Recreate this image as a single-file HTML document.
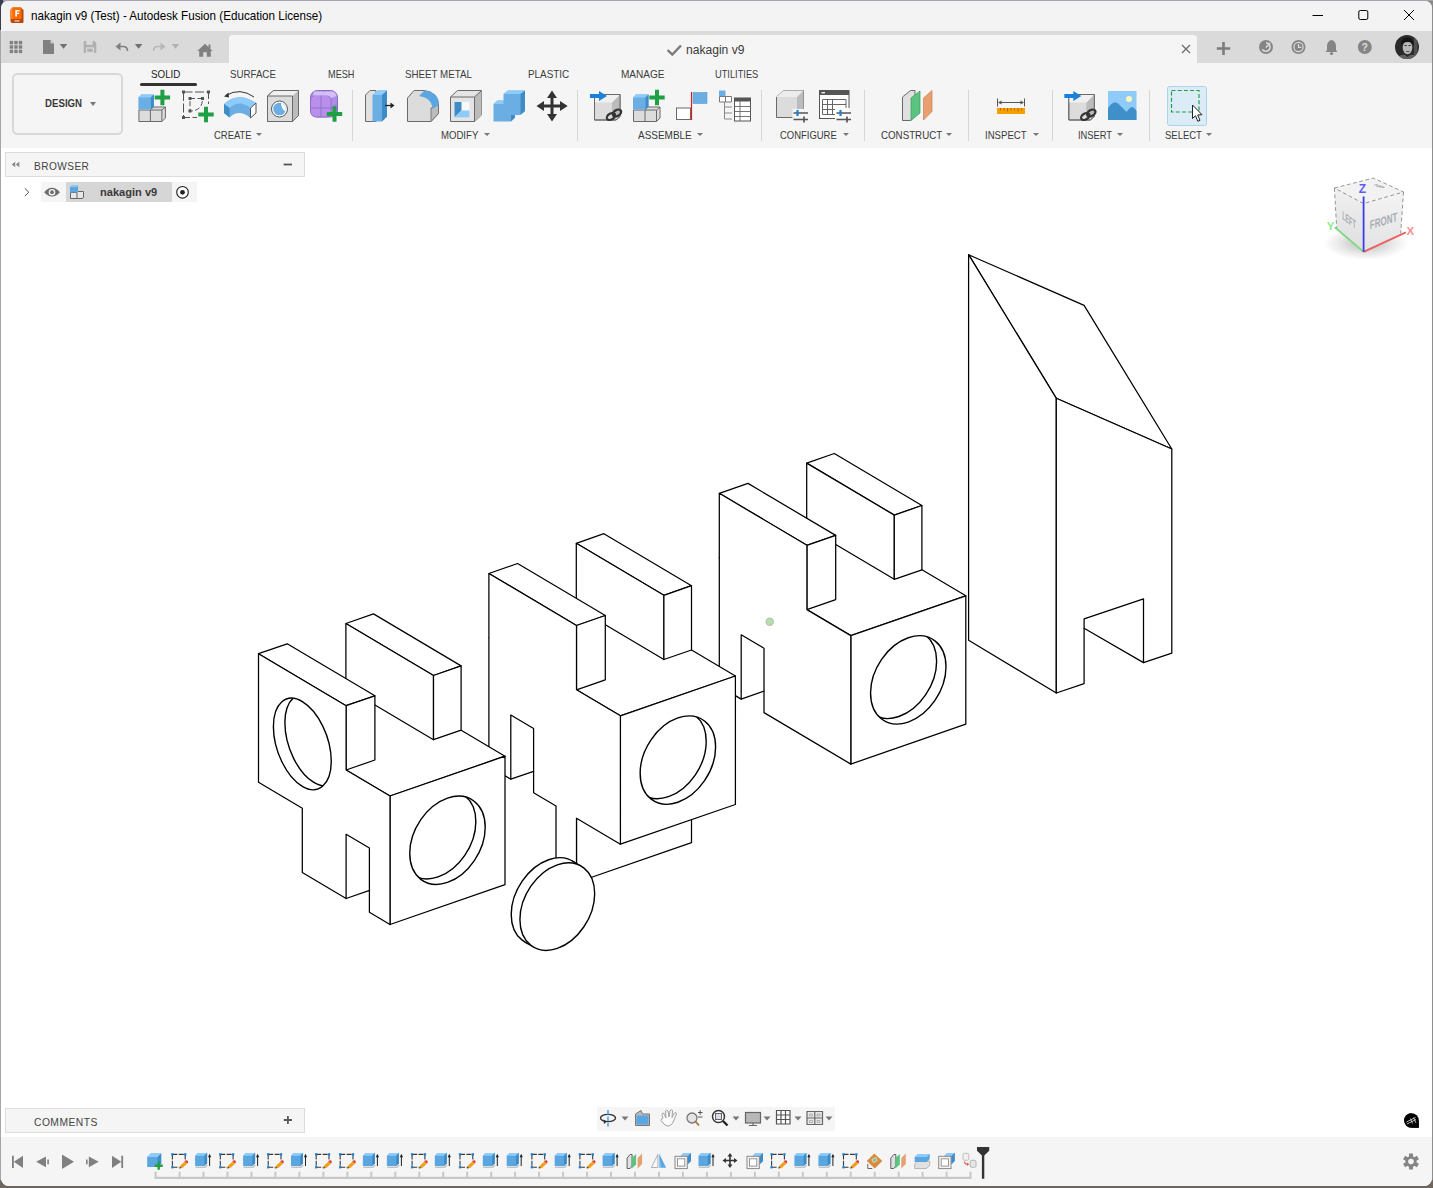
<!DOCTYPE html>
<html><head><meta charset="utf-8"><title>nakagin v9</title>
<style>
html,body{margin:0;padding:0;}
body{width:1433px;height:1188px;overflow:hidden;background:#8a8886;font-family:"Liberation Sans",sans-serif;position:relative;}
#win{position:absolute;left:1px;top:1px;width:1431px;height:1185px;background:#fff;border-radius:7px 7px 8px 8px;overflow:hidden;}
.abs{position:absolute;}
.t{position:absolute;white-space:nowrap;color:#3c3c3c;font-size:11px;line-height:14px;}
svg{position:absolute;overflow:visible;}
.sep{position:absolute;top:90px;width:1px;height:51px;background:#d6d6d6;}
.car{position:absolute;width:0;height:0;border-left:3px solid transparent;border-right:3px solid transparent;border-top:3.6px solid #777;}
</style></head><body>
<div class="abs" style="left:0;top:0;width:1433px;height:1px;background:#a4a4b0"></div>
<div class="abs" style="left:0;top:1px;width:2px;height:1180px;background:#a6a6a8"></div>
<div class="abs" style="left:0;top:0;width:3px;height:30px;background:#3a3c50"></div>
<div class="abs" style="left:1431px;top:8px;width:2px;height:1170px;background:#8e8e8e"></div>
<div class="abs" style="left:0;top:1180px;width:1433px;height:8px;background:#6e665e"></div>
<div id="win"></div>

<div class="abs" style="left:1px;top:1px;width:1431px;height:30px;background:#f3f3f3;border-radius:7px 7px 0 0"></div>
<svg style="left:10px;top:7px" width="15" height="17" viewBox="0 0 15 17">
<path d="M0.5 3 L2.5 0.5 H11 L13.5 3 V15 L13 16 H2 L0.5 15Z" fill="#b84a08"/>
<path d="M0.5 3 L2.5 0.5 H11.5 V12 H0.5Z" fill="#ff6a00"/>
<path d="M0.5 3 L2.5 0.5 V12 H0.5Z" fill="#ff8a2a"/>
<path d="M5.3 9.5 V3 H9.6 V4.5 H7 V5.7 H9.2 V7.1 H7 V9.5Z" fill="#fff"/>
<rect x="4.5" y="13.2" width="5" height="1.4" fill="#f0c0a0"/>
</svg>
<div class="t" style="left:31.20px;top:7.80px;font-size:12.40px;line-height:16px;color:#000;transform:scaleX(0.9395);transform-origin:0 50%;">nakagin v9 (Test) - Autodesk Fusion (Education License)</div>
<svg style="left:1300px;top:5px" width="130" height="22" viewBox="0 0 130 22" fill="none" stroke="#000" stroke-width="1">
<path d="M12.5 10.5 H23"/>
<rect x="58.8" y="5.5" width="9" height="9" rx="1.5"/>
<path d="M104 5 L114 15 M114 5 L104 15"/>
</svg>

<div class="abs" style="left:1px;top:31px;width:1431px;height:32px;background:#dadada"></div>
<div class="abs" style="left:229px;top:35px;width:967.5px;height:28px;background:#f5f5f5;border-radius:3.5px 3.5px 0 0"></div>
<svg style="left:0;top:31px" width="1433" height="32" viewBox="0 31 1433 32">
<!-- grid -->
<g fill="#808080"><rect x="9.70" y="40.90" width="3.4" height="3.4"/><rect x="14.25" y="40.90" width="3.4" height="3.4"/><rect x="18.80" y="40.90" width="3.4" height="3.4"/><rect x="9.70" y="45.30" width="3.4" height="3.4"/><rect x="14.25" y="45.30" width="3.4" height="3.4"/><rect x="18.80" y="45.30" width="3.4" height="3.4"/><rect x="9.70" y="49.70" width="3.4" height="3.4"/><rect x="14.25" y="49.70" width="3.4" height="3.4"/><rect x="18.80" y="49.70" width="3.4" height="3.4"/></g>
<!-- file -->
<path d="M43 40 H50.5 L54 43.5 V54 H43Z" fill="#808080"/><path d="M50.5 40 V43.5 H54Z" fill="#c8c8c8"/>
<path d="M59.8 44 H67.3 L63.55 48.8Z" fill="#707070"/>
<!-- save -->
<path d="M83.7 41 H94.3 L96.3 43 V53 H83.7Z" fill="#b0b0b0"/><rect x="86.2" y="41" width="6.5" height="3.8" fill="#dadada"/><rect x="86" y="47.3" width="8" height="5.7" fill="#dadada"/><rect x="87.200" y="48.6" width="5.6" height="3.2" fill="#b0b0b0"/>
<!-- undo -->
<path d="M117 46.5 H123 Q127.5 46.5 127.5 51" fill="none" stroke="#808080" stroke-width="1.6"/><path d="M115.5 46.5 L120.5 42.5 V50.5Z" fill="#808080"/>
<path d="M134.8 44 H142.4 L138.6 48.8Z" fill="#707070"/>
<!-- redo -->
<path d="M164 46.5 H158 Q153.5 46.5 153.5 51" fill="none" stroke="#b8b8b8" stroke-width="1.6"/><path d="M165.5 46.5 L160.5 42.5 V50.5Z" fill="#b8b8b8"/>
<path d="M171.700 44 H179.2 L175.45 48.8Z" fill="#b0b0b0"/>
<!-- home -->
<path d="M197.3 51 L205 43.8 L212.6 51 H210.8 V56.8 H206.8 V52.300 H203.2 V56.8 H199.2 V51Z" fill="#808080"/><rect x="208.500" y="44.500" width="2" height="4" fill="#808080"/>
<!-- check -->
<path d="M667.600 50 L672.300 54.600 L681 45.500" fill="none" stroke="#7a7a7a" stroke-width="2.400"/>
<!-- close x -->
<path d="M1182 45 L1190 53 M1190 45 L1182 53" stroke="#6c6c6c" stroke-width="1.300"/>
<!-- plus -->
<path d="M1216.800 48.500 H1230.200 M1223.500 42 V55" stroke="#7c7c7c" stroke-width="2.600"/>
<!-- job status -->
<circle cx="1266" cy="47" r="7" fill="#858585"/><path d="M1266 47.500 L1270 43 M1262.300 49.500 A4.300 4.300 0 1 0 1266 42.700" stroke="#dcdcdc" stroke-width="1.600" fill="none"/>
<!-- clock -->
<circle cx="1298.500" cy="47" r="7" fill="#858585"/><circle cx="1298.500" cy="47" r="4.600" fill="none" stroke="#dcdcdc" stroke-width="1.200"/><path d="M1298.500 44 V47.300 H1301.500" stroke="#dcdcdc" stroke-width="1.200" fill="none"/>
<!-- bell -->
<path d="M1331.500 40 Q1327 41 1327 46.500 V50 L1325.500 52 H1337.500 L1336 50 V46.500 Q1336 41 1331.500 40Z" fill="#858585"/><circle cx="1331.500" cy="53.500" r="1.600" fill="#858585"/>
<!-- help -->
<circle cx="1364.800" cy="47" r="7" fill="#858585"/>
<text x="1364.800" y="51" font-family="Liberation Sans" font-weight="bold" font-size="10.500" fill="#dcdcdc" text-anchor="middle">?</text>
<!-- avatar -->
<defs><radialGradient id="av" cx="0.55" cy="0.45" r="0.6"><stop offset="0" stop-color="#8c8c8c"/><stop offset="0.5" stop-color="#4c4c4c"/><stop offset="1" stop-color="#1c1c1c"/></radialGradient></defs>
<circle cx="1407" cy="47" r="12" fill="#2a2a2a"/>
<clipPath id="avc"><circle cx="1407" cy="47" r="12"/></clipPath>
<g clip-path="url(#avc)">
<ellipse cx="1407.500" cy="47.500" rx="4.800" ry="6.800" fill="#b8b8b8"/>
<path d="M1401 46 Q1401 36.500 1408 37.500 Q1414 38 1413.500 46 Q1411.500 41.500 1407.500 42 Q1403 42 1401 46Z" fill="#141414"/>
<path d="M1404.500 45.500 H1406.700 M1408.500 45.500 H1410.700" stroke="#303030" stroke-width="1.200"/>
<path d="M1406 51.500 H1409.500" stroke="#4a4a4a" stroke-width="0.900"/>
<path d="M1396 60 Q1400 54 1405 55 L1407.500 57 L1410 55 Q1416 54 1419 60Z" fill="#606060"/>
<rect x="1414" y="36" width="3.500" height="22" fill="#6a6a6a" opacity="0.600"/>
</g>
</svg>
<div class="t" style="left:686.20px;top:41.64px;font-size:12.30px;line-height:16px;color:#3a3a3a;transform:scaleX(0.9816);transform-origin:0 50%;">nakagin v9</div>

<div class="abs" style="left:1px;top:63px;width:1431px;height:84.7px;background:#f5f5f5"></div>
<div class="abs" style="left:12.2px;top:73.2px;width:106.4px;height:57.6px;border:2px solid #d8d8d8;border-radius:5.5px;box-sizing:content-box"></div>
<div class="t" style="left:44.50px;top:95.12px;font-size:10.90px;line-height:16px;color:#3a3a3a;font-weight:bold;transform:scaleX(0.8877);transform-origin:0 50%;">DESIGN</div>
<div class="car" style="left:89.9px;top:102px;border-left-width:3.2px;border-right-width:3.2px;border-top-width:4px"></div>
<div class="t" style="left:151.30px;top:66.35px;font-size:11.40px;line-height:16px;color:#222;transform:scaleX(0.8594);transform-origin:0 50%;">SOLID</div>
<div class="abs" style="left:139.5px;top:83.2px;width:57px;height:3px;background:#333;border-radius:1.5px"></div>
<div class="t" style="left:229.50px;top:66.35px;font-size:11.40px;line-height:16px;color:#3c3c3c;transform:scaleX(0.8524);transform-origin:0 50%;">SURFACE</div><div class="t" style="left:327.60px;top:66.35px;font-size:11.40px;line-height:16px;color:#3c3c3c;transform:scaleX(0.8045);transform-origin:0 50%;">MESH</div><div class="t" style="left:405.30px;top:66.35px;font-size:11.40px;line-height:16px;color:#3c3c3c;transform:scaleX(0.8575);transform-origin:0 50%;">SHEET METAL</div><div class="t" style="left:528.30px;top:66.35px;font-size:11.40px;line-height:16px;color:#3c3c3c;transform:scaleX(0.8671);transform-origin:0 50%;">PLASTIC</div><div class="t" style="left:621.40px;top:66.35px;font-size:11.40px;line-height:16px;color:#3c3c3c;transform:scaleX(0.8824);transform-origin:0 50%;">MANAGE</div><div class="t" style="left:714.50px;top:66.35px;font-size:11.40px;line-height:16px;color:#3c3c3c;transform:scaleX(0.8138);transform-origin:0 50%;">UTILITIES</div>
<div class="sep" style="left:351.5px"></div><div class="sep" style="left:577px"></div><div class="sep" style="left:761px"></div>
<div class="sep" style="left:863.5px"></div><div class="sep" style="left:967.5px"></div><div class="sep" style="left:1051.5px"></div><div class="sep" style="left:1148.5px"></div>
<div class="t" style="left:213.70px;top:127.03px;font-size:10.60px;line-height:16px;color:#3a3a3a;transform:scaleX(0.8931);transform-origin:0 50%;">CREATE</div><div class="car" style="left:255.6px;top:132.5px"></div><div class="t" style="left:440.60px;top:127.03px;font-size:10.60px;line-height:16px;color:#3a3a3a;transform:scaleX(0.9049);transform-origin:0 50%;">MODIFY</div><div class="car" style="left:483.7px;top:132.5px"></div><div class="t" style="left:637.60px;top:127.03px;font-size:10.60px;line-height:16px;color:#3a3a3a;transform:scaleX(0.9414);transform-origin:0 50%;">ASSEMBLE</div><div class="car" style="left:696.7px;top:132.5px"></div><div class="t" style="left:779.60px;top:127.03px;font-size:10.60px;line-height:16px;color:#3a3a3a;transform:scaleX(0.8931);transform-origin:0 50%;">CONFIGURE</div><div class="car" style="left:842.5px;top:132.5px"></div><div class="t" style="left:880.50px;top:127.03px;font-size:10.60px;line-height:16px;color:#3a3a3a;transform:scaleX(0.9197);transform-origin:0 50%;">CONSTRUCT</div><div class="car" style="left:946.3px;top:132.5px"></div><div class="t" style="left:985.00px;top:127.03px;font-size:10.60px;line-height:16px;color:#3a3a3a;transform:scaleX(0.9055);transform-origin:0 50%;">INSPECT</div><div class="car" style="left:1032.6px;top:132.5px"></div><div class="t" style="left:1077.60px;top:127.03px;font-size:10.60px;line-height:16px;color:#3a3a3a;transform:scaleX(0.8816);transform-origin:0 50%;">INSERT</div><div class="car" style="left:1117.4px;top:132.5px"></div><div class="t" style="left:1164.80px;top:127.03px;font-size:10.60px;line-height:16px;color:#3a3a3a;transform:scaleX(0.8948);transform-origin:0 50%;">SELECT</div><div class="car" style="left:1205.8px;top:132.5px"></div>
<svg style="left:0;top:62px" width="1433" height="86" viewBox="0 62 1433 86">
<defs>
<g id="plus"><path d="M-7.700 -2 H-2 V-7.700 H2 V-2 H7.700 V2 H2 V7.700 H-2 V2 H-7.700Z" fill="#1fa045"/></g>
<g id="newcomp">
 <path d="M0.500 16.500 H12 L15 13.500 H27 V24.500 L23.500 28 H0.500Z" fill="#dcdcdc" stroke="#6a6a6a" stroke-width="1"/>
 <path d="M12 16.500 V28 M12 16.500 H23.500 V28 M23.500 16.500 L27 13.500" fill="none" stroke="#6a6a6a" stroke-width="1"/>
 <path d="M0 4 L3 1 H15.500 V13 L12.500 16 H0Z" fill="#6aaee4"/>
 <path d="M0 4 L3 1 H15.500 L12.500 4Z" fill="#8ecbf9"/><path d="M12.500 4 L15.500 1 V13 L12.500 16Z" fill="#3d8cc8"/>
 <use href="#plus" x="24" y="4"/>
</g>
<g id="derive">
 <path d="M0.500 4.500 L4 1 H26 V23 L22 26.500 H0.500Z" fill="#dcdcdc" stroke="#6a6a6a" stroke-width="1"/>
 <path d="M18 9 L26 1 V23 L18 26.500Z" fill="#bcbcbc"/><path d="M0.500 4.500 L4 1 H26 L18 9 H0.500Z" fill="#f0f0f0"/>
 <path d="M0.500 4.500 L4 1 H26 V23 L22 26.500 H0.500Z" fill="none" stroke="#6a6a6a" stroke-width="1"/>
 <path d="M-4 0.500 H5 V-2.500 L13 2.500 L5 7.500 V4.500 H-4Z" fill="#1a80d8"/>
 <g fill="none" stroke="#333" stroke-width="2.200"><ellipse cx="17" cy="23" rx="4.600" ry="3" transform="rotate(-32 17 23)"/><ellipse cx="23" cy="19.500" rx="4.600" ry="3" transform="rotate(-32 23 19.500)"/></g>
</g>
<g id="sliders" stroke="#555" stroke-width="1.700" fill="none"><path d="M0 2.500 H14.500 M0 9 H14.500 M10.500 6 V12"/><path d="M4 -0.500 V5.500" stroke="#1a80d8" stroke-width="2.200"/></g>
</defs>
<!-- CREATE -->
<use href="#newcomp" x="138.400" y="93.500"/>
<g fill="none" stroke="#555" stroke-width="1">
 <path d="M183.500 92 H208.500 V104 M183.500 92 V117.500 H197" stroke-dasharray="9 2.500"/>
 <path d="M190 98.500 H202.500 Q202.500 111 190 111Z" stroke-dasharray="5 2.500"/>
</g>
<g fill="#555"><rect x="182" y="90.500" width="3" height="3"/><rect x="207" y="90.500" width="3" height="3"/><rect x="182" y="116" width="3" height="3"/><rect x="188.500" y="97" width="3" height="3"/><rect x="201" y="97" width="3" height="3"/><rect x="188.500" y="109.500" width="3" height="3"/></g>
<use href="#plus" x="206" y="114.500"/>
<!-- revolve/sweep -->
<path d="M224 104 Q238 91 256 103 V113 L250.500 118 Q239 108.500 229.500 117.500 L224 113Z" fill="#6aaee4"/>
<path d="M224 104 Q238 91 256 103 L250.500 108 Q239 99 229.500 108Z" fill="#8ecbf9"/>
<path d="M224 104 L229.500 108 V117.500 L224 113Z" fill="#3d8cc8"/>
<path d="M250.500 108 L256 103 V113 L250.500 118Z" fill="#fff" stroke="#555" stroke-width="1"/>
<path d="M226 95.500 Q240 87 254 97" fill="none" stroke="#333" stroke-width="1"/><path d="M224 96.500 L228.500 92.500 L229 97.500Z" fill="#333"/>
<!-- hole -->
<path d="M267.500 96 L273.500 90.500 H298.500 V115.500 L292.500 121.500 H267.500Z" fill="#dcdcdc" stroke="#6a6a6a" stroke-width="1"/>
<path d="M267.500 96 L273.500 90.500 H298.500 L292.500 96Z" fill="#f0f0f0"/><path d="M292.500 96 L298.500 90.500 V115.500 L292.500 121.500Z" fill="#bcbcbc"/>
<path d="M267.500 96 L273.500 90.500 H298.500 V115.500 L292.500 121.500 H267.500Z M267.500 96 H292.500 V121.500" fill="none" stroke="#6a6a6a" stroke-width="1"/>
<circle cx="279.500" cy="109" r="8" fill="#fff" stroke="#555" stroke-width="1"/><circle cx="279.500" cy="109" r="6.300" fill="#6aaee4"/><path d="M281 102.900 A6.300 6.300 0 0 1 285.300 111.500 Q281 108 281 102.900Z" fill="#fff"/>
<!-- form -->
<rect x="310.500" y="90.500" width="27" height="26.500" rx="7" fill="#b08ce8" stroke="#8a6ac0" stroke-width="1"/>
<rect x="310.500" y="95" width="20.500" height="22" rx="5.500" fill="#b890ec" stroke="#8a6ac0" stroke-width="0.800"/>
<path d="M321 95 V117 M310.500 108 H331 M321 95 Q323 91 327 90.500 M331 108 Q335 106 337.500 103" fill="none" stroke="#9070c8" stroke-width="0.900"/>
<path d="M314 91.500 H332 Q336 92 336.500 96 L331 98 Q330 95.500 326 95.500 H313Z" fill="#d8c4f8" opacity="0.900"/>
<use href="#plus" x="334.500" y="114"/>
<!-- MODIFY: press pull -->
<path d="M365.500 95 L370 90.500 H376 V121.500 H365.500Z" fill="#e0e0e0" stroke="#6a6a6a" stroke-width="1"/>
<path d="M372.500 95 L377.500 90.500 H387 V116.500 L382 121.500 H372.500Z" fill="#6aaee4"/><path d="M372.500 95 L377.500 90.500 H387 L382 95Z" fill="#8ecbf9"/><path d="M382 95 L387 90.500 V116.500 L382 121.500Z" fill="#3d8cc8"/>
<path d="M385 105.500 H391.500" stroke="#222" stroke-width="1.300"/><path d="M390.500 102.500 L394.500 105.500 L390.500 108.500Z" fill="#222"/>
<!-- fillet -->
<path d="M407.500 98 L414 90.500 H424 Q438.500 92 438.500 106 V113.500 L431 121.500 H407.500Z" fill="#dcdcdc" stroke="#6a6a6a" stroke-width="1"/>
<path d="M431 121.500 V108 L438.500 104.500 V113.500Z" fill="#bcbcbc" stroke="#6a6a6a" stroke-width="0.800"/>
<path d="M419 96 L424.500 90.500 Q438.500 92 439 104.500 L432.500 109 Q432 98 419 96Z" fill="#5aa6e0"/>
<!-- shell -->
<path d="M450.500 97 L457.500 90.500 H481.500 V115 L474.500 121.500 H450.500Z" fill="#e4e4e4" stroke="#6a6a6a" stroke-width="1"/>
<path d="M474.500 97 L481.500 90.500 V115 L474.500 121.500Z" fill="#bcbcbc"/><path d="M450.500 97 H474.500 V121.500 M474.500 97 L481.500 90.500" fill="none" stroke="#6a6a6a" stroke-width="1"/>
<rect x="454.500" y="102" width="15" height="15.500" fill="#f8f8f8"/><path d="M454.500 102 H461.500 V110.500 L454.500 117.500Z" fill="#3d8cc8"/><path d="M454.500 117.500 L461.500 110.500 H469.500 V117.500Z" fill="#8ecbf9"/>
<!-- combine -->
<path d="M493.500 104 L497.500 100.500 H503.500 V94 L508 90.500 H525 V111 L520 115 H515 V117.500 L511 121.500 H493.500Z" fill="#6aaee4"/>
<path d="M503.500 94 L508 90.500 H525 L520.500 94Z M493.500 104 L497.500 100.500 H503.500 V104Z" fill="#8ecbf9"/><path d="M520.500 94 L525 90.500 V111 L520.500 115Z M511 115 H515 V117.500 L511 121.500Z" fill="#3d8cc8"/>
<!-- move -->
<path d="M552 90.500 L557 98 H553.500 V104.500 H560 V101 L567.700 106 L560 111 V107.500 H553.500 V114 H557 L552 121.500 L547 114 H550.500 V107.500 H544 V111 L536.500 106 L544 101 V104.500 H550.500 V98 H547Z" fill="#333"/>
<!-- ASSEMBLE -->
<use href="#derive" x="594" y="93.500"/>
<use href="#newcomp" x="633" y="93.500"/>
<rect x="676.500" y="108" width="14" height="11.500" fill="#fff" stroke="#6a6a6a" stroke-width="1"/><path d="M691.500 92 V120" stroke="#d82020" stroke-width="1.200"/><rect x="693" y="92.500" width="14" height="11" fill="#6aaee4" stroke="#5a9ad0" stroke-width="0.600"/>
<rect x="719" y="90.500" width="6.500" height="6" fill="#6aaee4"/><path d="M719.500 96.500 H725.500 V102 H719.500Z M725.500 96.500 H731.500 V102 H725.500Z" fill="#fff" stroke="#777" stroke-width="1"/>
<path d="M724.500 102 V119 M724.500 107 H732 M724.500 113 H732 M724.500 119 H732" fill="none" stroke="#888" stroke-width="1"/>
<rect x="734.500" y="98" width="16" height="23" fill="#fff" stroke="#555" stroke-width="1"/><rect x="734.500" y="98" width="16" height="3.500" fill="#555"/><path d="M740 101 V121 M734.500 106.500 H750.500 M734.500 111.500 H750.500 M734.500 116.500 H750.500" stroke="#666" stroke-width="0.900" fill="none"/>
<!-- CONFIGURE -->
<path d="M776.500 97 L783.500 90.500 H803.500 V112 L797 117.500 H776.500Z" fill="#dcdcdc" stroke="#6a6a6a" stroke-width="1"/>
<path d="M797 97 L803.500 90.500 V112 L797 117.500Z" fill="#bcbcbc"/><path d="M776.500 97 L783.500 90.500 H803.500 L797 97Z" fill="#ececec"/>
<rect x="792.500" y="109" width="16.500" height="13" fill="#f5f5f5"/>
<use href="#sliders" x="793.500" y="110.500"/>
<rect x="819.500" y="90.500" width="29.500" height="28" fill="#fff" stroke="#555" stroke-width="1"/><rect x="819.500" y="90.500" width="29.500" height="4.500" fill="#555"/><rect x="821.500" y="92" width="3.500" height="1.400" fill="#eee"/>
<path d="M822.500 99.500 H846 V114.500 H822.500Z M822.500 104.500 H846 M822.500 109.500 H846 M827.500 99.500 V114.500 M832.500 99.500 V114.500" fill="none" stroke="#666" stroke-width="1"/>
<rect x="835" y="108" width="17" height="14" fill="#f5f5f5"/><rect x="835" y="108" width="14" height="10" fill="#fff"/>
<use href="#sliders" x="836.500" y="110.500"/>
<!-- CONSTRUCT -->
<path d="M902.500 97 L910.500 90.500 H915 V114 L910.500 120.500 H902.500Z" fill="#e0e0e0" stroke="#6a6a6a" stroke-width="1"/>
<path d="M911 98 L920 91 V113 L911 120.500Z" fill="#5ac480" stroke="#3a9a5a" stroke-width="0.700"/>
<path d="M923.500 98 L932 90.500 V111.500 L923.500 120Z" fill="#e8a070" stroke="#c88050" stroke-width="0.700"/>
<!-- INSPECT -->
<path d="M997.500 98.500 V106.500 M1024.500 98.500 V106.500 M999.500 102.500 H1022.500" stroke="#555" stroke-width="1" fill="none"/><path d="M998 102.500 L1001.500 100.500 V104.500Z M1024 102.500 L1020.500 100.500 V104.500Z" fill="#555"/>
<rect x="997" y="108" width="28" height="6" fill="#f5a000"/><path d="M1000.500 108 V110.500 M1004 108 V110.500 M1007.500 108 V111.500 M1011 108 V110.500 M1014.500 108 V110.500 M1018 108 V111.500 M1021.500 108 V110.500" stroke="#a86800" stroke-width="0.900"/>
<!-- INSERT -->
<use href="#derive" x="1068.300" y="93.500"/>
<rect x="1108" y="91" width="28.500" height="29" fill="#8ecbf9"/><path d="M1108 108 Q1113 100 1118 103.500 Q1123 108 1126.500 112 Q1130 107 1132.500 107 Q1135 108 1136.500 111 V120 H1108Z" fill="#3f8fc8"/><circle cx="1129" cy="99" r="3" fill="#fdf6c0"/>
<!-- SELECT -->
<rect x="1167.500" y="86.500" width="39" height="39" rx="2" fill="#dcecf6" stroke="#a8d4ee" stroke-width="1"/>
<rect x="1171.500" y="90.500" width="27.500" height="21.500" fill="none" stroke="#1fa045" stroke-width="1.200" stroke-dasharray="4 2.200"/>
<path d="M1192.500 105 V118.500 L1195.500 115.800 L1197.800 121.300 L1200 120.300 L1197.700 115 L1202 114.700Z" fill="#fff" stroke="#222" stroke-width="1"/>
</svg>

<div class="abs" style="left:5px;top:152px;width:298px;height:23px;background:#f5f5f5;border:1px solid #dcdcdc;box-sizing:content-box"></div>
<svg style="left:0;top:148px" width="320" height="60" viewBox="0 148 320 60">
<path d="M15.200 161.800 V167.200 L11.700 164.500Z M19.300 161.800 V167.200 L15.800 164.500Z" fill="#888"/>
<path d="M283.600 164.500 H292" stroke="#555" stroke-width="1.800"/>
<rect x="41" y="182" width="156" height="20" fill="#f5f5f5"/>
<rect x="66" y="182" width="106" height="20" fill="#d6d6d6"/>
<path d="M24.800 188.300 L28.800 192.200 L24.800 196.100" fill="none" stroke="#555" stroke-width="1"/>
<path d="M44.200 192.200 Q52 183.400 59.900 192.200 Q52 201 44.200 192.200Z" fill="#6c6c6c"/><circle cx="52" cy="192.200" r="3.300" fill="#f5f5f5"/><circle cx="52" cy="192.200" r="1.900" fill="#6c6c6c"/>
<path d="M70.500 192.500 H77 L78 191.500 H83.500 V197 L82.500 198.500 H70.500Z M77 192.500 V198.500" fill="#e8e8e8" stroke="#666" stroke-width="1"/>
<path d="M70 187 L71.500 185.500 H78 V191 L76.500 192.500 H70Z" fill="#5aa6e0"/><path d="M70 187 L71.500 185.500 H78 L76.500 187Z" fill="#8ecbf9"/>
<circle cx="182.500" cy="192.300" r="5.800" fill="#fff" stroke="#222" stroke-width="1.100"/><circle cx="182.500" cy="192.300" r="2.400" fill="#222"/>
</svg>
<div class="t" style="left:33.80px;top:157.92px;font-size:11.50px;line-height:16px;color:#444;letter-spacing:0.50px;transform:scaleX(0.8789);transform-origin:0 50%;">BROWSER</div>
<div class="t" style="left:99.50px;top:184.49px;font-size:11.00px;line-height:16px;color:#3a3a3a;font-weight:bold;transform:scaleX(1.0060);transform-origin:0 50%;">nakagin v9</div>
<svg id="model" width="1433" height="1188" viewBox="0 0 1433 1188" style="position:absolute;left:0;top:0" fill="#fff" stroke="#000" stroke-width="1.25" stroke-linejoin="round" stroke-linecap="round">
<polygon points="968.6,254.7 1084.1,305.4 1171.8,449.0 1056.3,398.3" fill="#fff"/>
<polygon points="968.6,254.7 1056.3,398.3 1056.3,693.0 968.6,640.2" fill="#fff"/>
<polygon points="1056.3,398.3 1171.8,449.0 1171.8,653.2 1143.5,662.6 1143.5,598.8 1084.1,618.9 1084.1,683.6 1056.3,693.0" fill="#fff"/>
<line x1="1084.1" y1="628.3" x2="1143.5" y2="662.6"/>
<polygon points="719.3,557.6 834.3,517.8 965.8,595.8 850.8,635.6" fill="#fff"/>
<polygon points="850.8,635.6 965.8,595.8 965.8,724.2 850.8,764.1" fill="#fff"/>
<clipPath id="hc1"><circle r="0.3280" transform="matrix(115.000 -39.800 0.000 128.500 908.27 679.90)" vector-effect="non-scaling-stroke" stroke-width="1.4" /></clipPath><circle r="0.3280" transform="matrix(115.000 -39.800 0.000 128.500 908.27 679.90)" vector-effect="non-scaling-stroke" stroke-width="1.4" fill="#fff"/><g clip-path="url(#hc1)"><circle r="0.3280" transform="matrix(115.000 -39.800 0.000 128.500 898.90 674.34)" vector-effect="non-scaling-stroke" stroke-width="1.4" fill="none"/></g>
<polygon points="806.7,463.1 834.3,453.5 921.9,505.5 894.3,515.1" fill="#fff"/>
<polygon points="806.7,463.1 894.3,515.1 894.3,579.3 806.7,527.3" fill="#fff"/>
<polygon points="894.3,515.1 921.9,505.5 921.9,569.8 894.3,579.3" fill="#fff"/>
<polygon points="719.3,493.3 748.0,483.4 835.7,535.4 806.9,545.3" fill="#fff"/>
<polygon points="806.9,545.3 835.7,535.4 835.7,599.6 806.9,609.6" fill="#fff"/>
<polygon points="719.3,493.3 806.9,545.3 806.9,609.6 850.8,635.6 850.8,764.1 764.0,712.6 764.0,648.3 741.2,634.8 741.2,699.1 719.3,686.1" fill="#fff"/>
<line x1="741.2" y1="699.1" x2="764.0" y2="691.2"/>
<polygon points="576.5,818.2 691.5,778.5 691.5,842.7 576.5,882.5" fill="#fff"/>
<polygon points="488.9,637.8 603.9,598.0 735.4,676.0 620.4,715.8" fill="#fff"/>
<polygon points="620.4,715.8 735.4,676.0 735.4,804.5 620.4,844.2" fill="#fff"/>
<clipPath id="hc2"><circle r="0.3280" transform="matrix(115.000 -39.800 0.000 128.500 677.88 760.10)" vector-effect="non-scaling-stroke" stroke-width="1.4" /></clipPath><circle r="0.3280" transform="matrix(115.000 -39.800 0.000 128.500 677.88 760.10)" vector-effect="non-scaling-stroke" stroke-width="1.4" fill="#fff"/><g clip-path="url(#hc2)"><circle r="0.3280" transform="matrix(115.000 -39.800 0.000 128.500 668.50 754.54)" vector-effect="non-scaling-stroke" stroke-width="1.4" fill="none"/></g>
<polygon points="576.3,543.3 603.9,533.7 691.5,585.7 663.9,595.3" fill="#fff"/>
<polygon points="576.3,543.3 663.9,595.3 663.9,659.5 576.3,607.5" fill="#fff"/>
<polygon points="663.9,595.3 691.5,585.7 691.5,650.0 663.9,659.5" fill="#fff"/>
<polygon points="488.9,573.5 517.6,563.5 605.3,615.5 576.5,625.5" fill="#fff"/>
<polygon points="576.5,625.5 605.3,615.5 605.3,679.8 576.5,689.8" fill="#fff"/>
<polygon points="488.9,573.5 576.5,625.5 576.5,689.8 620.4,715.8 620.4,844.2 576.5,818.2 576.5,882.5 556.0,870.3 556.0,806.0 533.6,792.8 533.6,728.5 510.8,715.0 510.8,779.2 488.9,766.2" fill="#fff"/>
<line x1="510.8" y1="779.2" x2="533.6" y2="771.4"/>
<polygon points="258.5,718.0 373.5,678.2 505.0,756.2 390.0,796.0" fill="#fff"/>
<polygon points="390.0,796.0 505.0,756.2 505.0,884.7 390.0,924.5" fill="#fff"/>
<clipPath id="hc3"><circle r="0.3280" transform="matrix(115.000 -39.800 0.000 128.500 447.48 840.30)" vector-effect="non-scaling-stroke" stroke-width="1.4" /></clipPath><circle r="0.3280" transform="matrix(115.000 -39.800 0.000 128.500 447.48 840.30)" vector-effect="non-scaling-stroke" stroke-width="1.4" fill="#fff"/><g clip-path="url(#hc3)"><circle r="0.3280" transform="matrix(115.000 -39.800 0.000 128.500 438.10 834.74)" vector-effect="non-scaling-stroke" stroke-width="1.4" fill="none"/></g>
<polygon points="345.9,623.5 373.5,613.9 461.1,665.9 433.5,675.5" fill="#fff"/>
<polygon points="345.9,623.5 433.5,675.5 433.5,739.7 345.9,687.7" fill="#fff"/>
<polygon points="433.5,675.5 461.1,665.9 461.1,730.2 433.5,739.7" fill="#fff"/>
<polygon points="258.5,653.7 287.2,643.8 374.9,695.8 346.1,705.7" fill="#fff"/>
<polygon points="346.1,705.7 374.9,695.8 374.9,760.0 346.1,770.0" fill="#fff"/>
<polygon points="258.5,653.7 346.1,705.7 346.1,770.0 390.0,796.0 390.0,924.5 369.4,912.2 369.4,848.0 346.1,834.2 346.1,898.5 302.3,872.5 302.3,808.2 258.5,782.2" fill="#fff"/>
<line x1="346.1" y1="898.5" x2="369.6" y2="890.3"/>
<clipPath id="hc4"><circle r="0.3300" transform="matrix(87.650 52.000 0.000 128.500 302.32 743.95)" vector-effect="non-scaling-stroke" stroke-width="1.4" /></clipPath><circle r="0.3300" transform="matrix(87.650 52.000 0.000 128.500 302.32 743.95)" vector-effect="non-scaling-stroke" stroke-width="1.4" fill="#fff"/><g clip-path="url(#hc4)"><circle r="0.3300" transform="matrix(87.650 52.000 0.000 128.500 313.82 739.97)" vector-effect="non-scaling-stroke" stroke-width="1.4" fill="none"/></g>
<circle r="0.3250" transform="matrix(115.000 -39.800 0.000 128.500 548.60 901.50)" vector-effect="non-scaling-stroke" stroke-width="1.4" fill="#fff"/>
<polygon points="533.4,947.0 524.7,941.9 572.5,861.1 581.2,866.2" fill="#fff" stroke="none"/>
<line x1="533.4" y1="947.0" x2="524.7" y2="941.9"/>
<line x1="581.2" y1="866.2" x2="572.5" y2="861.1"/>
<circle r="0.3250" transform="matrix(115.000 -39.800 0.000 128.500 557.30 906.60)" vector-effect="non-scaling-stroke" stroke-width="1.4" fill="#fff"/>
<circle cx="769.7" cy="621.8" r="3.7" fill="#b2e0a6" stroke="#bcc0bc" stroke-width="1.1"/>
</svg>
<svg style="left:1300px;top:160px" width="133" height="110" viewBox="1300 160 133 110">
<defs>
<radialGradient id="shd" cx="0.500" cy="0.500" r="0.500"><stop offset="0" stop-color="#000" stop-opacity="0.280"/><stop offset="0.600" stop-color="#000" stop-opacity="0.100"/><stop offset="1" stop-color="#000" stop-opacity="0"/></radialGradient>
<linearGradient id="fl" x1="0" y1="0" x2="0" y2="1"><stop offset="0" stop-color="#f0f0f0"/><stop offset="1" stop-color="#dedede"/></linearGradient>
<linearGradient id="fr" x1="0" y1="0" x2="0" y2="1"><stop offset="0" stop-color="#f4f4f4"/><stop offset="1" stop-color="#e2e2e2"/></linearGradient>
</defs>
<ellipse cx="1366" cy="243" rx="42" ry="17" fill="url(#shd)"/>
<path d="M1334.400 188 L1363.600 203.600 V251.900 L1336.700 228.700Z" fill="url(#fl)"/>
<path d="M1363.600 203.600 L1403.500 192 L1400.700 233.400 L1363.600 251.900Z" fill="url(#fr)"/>
<path d="M1334.400 188 L1373.400 178.100 L1403.500 192 L1363.600 203.600Z" fill="#f2f2f2"/>
<g fill="none" stroke="#7c7c7c" stroke-width="0.800" stroke-dasharray="3.800 2.600">
<path d="M1334.400 188 L1373.400 178.100 L1403.500 192 L1363.600 203.600Z"/><path d="M1334.400 188 L1336.700 228.700"/><path d="M1403.500 192 L1400.700 233.400"/>
</g>
<path d="M1363.600 251.900 L1334.800 227.300" stroke="#7ed87e" stroke-width="1.800"/>
<path d="M1363.600 251.900 L1405.800 232.400" stroke="#e86060" stroke-width="1.800"/>
<path d="M1363.600 196.500 V251.900" stroke="#3a3aee" stroke-width="1.800"/>
<text x="1358.800" y="193" font-family="Liberation Sans" font-weight="bold" font-size="12" fill="#5c5cf4">Z</text>
<text x="1326.800" y="229.500" font-family="Liberation Sans" font-weight="bold" font-size="11.500" fill="#8cec8c">Y</text>
<text x="1406.500" y="235" font-family="Liberation Sans" font-weight="bold" font-size="11.500" fill="#f49090">X</text>
<text transform="matrix(0.450 0.340 0 1 1342.200 219)" font-family="Liberation Sans" font-weight="bold" font-size="12" fill="#a8acb2">LEFT</text>
<text transform="matrix(0.640 -0.200 0 1 1369.800 229.500)" font-family="Liberation Sans" font-weight="bold" font-size="12.500" fill="#a8acb2">FRONT</text>
<text transform="matrix(0.900 0.300 -0.900 0.300 1372 185)" font-family="Liberation Sans" font-size="5.500" font-weight="bold" fill="#8a8e94">TOP</text>
</svg>

<div class="abs" style="left:597px;top:1107px;width:238px;height:24px;background:#f5f5f5"></div>
<svg style="left:580px;top:1095px" width="280" height="45" viewBox="580 1095 280 45">
<ellipse cx="608" cy="1118" rx="7.500" ry="3.600" fill="none" stroke="#333" stroke-width="1.400"/><path d="M608 1110 V1126.500" stroke="#4aa8ec" stroke-width="1.600" stroke-dasharray="4.500 2"/><path d="M603.500 1119.500 L607 1121.500 L604 1124Z" fill="#333"/>
<path d="M621.500 1116.500 H628.500 L625 1120.500Z" fill="#777"/>
<path d="M635.500 1114 L641 1110.500 L642.500 1114 H649.500 V1125.500 H635.500Z" fill="#bbb" stroke="#777" stroke-width="1"/><rect x="636.500" y="1115.500" width="12" height="9" fill="#5aa6e0"/>
<path d="M663 1118 Q661 1113 663.500 1113 L666 1118 L665.500 1111 Q667 1109.500 668 1111 L669 1117 L670 1110.500 Q671.500 1109 672.500 1110.500 L672 1117.500 L674.500 1113 Q676.500 1112 676.500 1114 L673.500 1121 Q672 1126 667 1126 Q664 1125 661 1120.500 Q661 1118.500 663 1118Z" fill="#fafafa" stroke="#999" stroke-width="0.900"/>
<circle cx="692" cy="1118" r="5" fill="#e4e4e4" stroke="#777" stroke-width="1.300"/><path d="M695.500 1121.500 L699 1125.500" stroke="#b07030" stroke-width="1.800"/><path d="M698 1112.500 H702.500 M700.200 1110.300 V1114.800 M698 1117 H702.500" stroke="#555" stroke-width="1"/>
<circle cx="718.500" cy="1116.500" r="6" fill="#fff" stroke="#333" stroke-width="1.500"/><rect x="715.500" y="1113.500" width="6" height="6" fill="#d8dce8" stroke="#555" stroke-width="0.900"/><path d="M723 1121 L727.500 1125.500" stroke="#222" stroke-width="2.400"/>
<path d="M732.500 1116.500 H739.500 L736 1120.500Z" fill="#777"/>
<rect x="745.500" y="1112.500" width="15" height="10.500" fill="#b8b8b8" stroke="#666" stroke-width="1.200"/><path d="M749 1125.500 H757 M753 1123 V1125.500" stroke="#666" stroke-width="1.200"/>
<path d="M763.500 1116.500 H770.500 L767 1120.500Z" fill="#777"/>
<path d="M776.500 1110.500 H790 V1124 H776.500Z M781 1110.500 V1124 M785.500 1110.500 V1124 M776.500 1115 H790 M776.500 1119.500 H790" fill="#fff" stroke="#555" stroke-width="1.200"/>
<path d="M794.500 1116.500 H801.500 L798 1120.500Z" fill="#777"/>
<path d="M807 1111.500 H822.500 V1124.500 H807Z M814.800 1111.500 V1124.500 M807 1118 H822.500" fill="#e8e8e8" stroke="#666" stroke-width="1.200"/><path d="M809.500 1114 H812.500 V1116 H809.500Z M817 1114 H820 V1116 H817Z M809.500 1120.500 H812.500 V1122.500 H809.500Z M817 1120.500 H820 V1122.500 H817Z" fill="none" stroke="#999" stroke-width="0.700"/>
<path d="M825.500 1116.500 H832.500 L829 1120.500Z" fill="#777"/>
</svg>
<svg style="left:1400px;top:1108px" width="24" height="24" viewBox="1400 1108 24 24">
<path d="M1411.500 1113.200 A7.300 7.300 0 1 0 1418.800 1120.500 V1127.800 H1411.500" fill="#000"/><circle cx="1411.500" cy="1120.500" r="7.300" fill="#000"/><path d="M1418.800 1120.500 V1127.800 H1411.500Z" fill="#000"/>
<path d="M1406.500 1122 L1415.500 1117.500 M1407 1124 L1416 1119.500 M1410.500 1118.500 L1412.500 1123.500 M1413.500 1117.500 L1416 1123" stroke="#ddd" stroke-width="0.800" fill="none"/>
</svg>

<div class="abs" style="left:5px;top:1108px;width:298px;height:22.5px;background:#f5f5f5;border:1px solid #dcdcdc;box-sizing:content-box"></div>
<div class="t" style="left:33.60px;top:1113.92px;font-size:11.50px;line-height:16px;color:#444;letter-spacing:0.50px;transform:scaleX(0.8962);transform-origin:0 50%;">COMMENTS</div>
<svg style="left:280px;top:1112px" width="16" height="16" viewBox="280 1112 16 16"><path d="M283.800 1120 H292 M287.900 1115.900 V1124.100" stroke="#5a5a5a" stroke-width="1.800"/></svg>

<div class="abs" style="left:1px;top:1137px;width:1431px;height:49px;background:#f5f5f5;border-radius:0 0 8px 8px"></div>
<svg style="left:0;top:1137px" width="1433" height="51" viewBox="0 1137 1433 51">
<defs>
<g id="i_ex"><path d="M0.300 14.300 H10 L12.300 12" fill="none" stroke="#c4c4c4" stroke-width="1.600"/><path d="M0 2.800 L2.800 0 H12 V10.200 L9.300 13 H0Z" fill="#5aa6e0"/><path d="M0 2.800 L2.800 0 H12 L9.300 2.800Z" fill="#8ecbf9"/><path d="M9.300 2.800 L12 0 V10.200 L9.300 13Z" fill="#3d8cc8"/><path d="M14.500 13 V2.500" stroke="#222" stroke-width="1"/><path d="M12.900 4.300 L14.500 0.800 L16.100 4.300Z" fill="#222"/></g>
<g id="i_sk"><path d="M1.200 1.400 H14 V8.500 M1.200 1.400 V14.200 H8" fill="none" stroke="#3a3a3a" stroke-width="1.100" stroke-dasharray="5 1.400"/><g fill="#1a80d8"><rect x="0" y="0.200" width="2.300" height="2.300"/><rect x="12.900" y="0.200" width="2.300" height="2.300"/><rect x="0" y="13.100" width="2.300" height="2.300"/></g><path d="M8 15.600 L9.200 12.600 L13.800 8.200 L16 10.400 L11.300 14.900Z" fill="#f0a020"/><path d="M8 15.600 L8.800 13.600 L10.200 15Z" fill="#444"/><path d="M13.800 8.200 L14.600 7.400 Q15.800 6.800 16.500 7.800 L16.800 9.400 L16 10.400Z" fill="#e83030"/></g>
<g id="i_nc"><path d="M0 4 L3.500 0.500 H14 V10.500 L10.500 14 H0Z" fill="#5aa6e0"/><path d="M0 4 L3.500 0.500 H14 L10.500 4Z" fill="#8ecbf9"/><path d="M10.500 4 L14 0.500 V10.500 L10.500 14Z" fill="#3d8cc8"/><path d="M7.500 11.500 H10.300 V8.700 H12.700 V11.500 H15.500 V13.900 H12.700 V16.700 H10.300 V13.900 H7.500Z" fill="#1fa045"/></g>
<g id="i_pl"><path d="M0.500 5 L3.500 1.500 H5.500 V13 L3.500 15.500 H0.500Z" fill="#e0e0e0" stroke="#555" stroke-width="0.900"/><path d="M5 5 L9.500 1 V11.500 L5 15.500Z" fill="#5ac480"/><path d="M11 5 L15.500 0.500 V11 L11 15.500Z" fill="#e8a070"/></g>
<g id="i_tri"><path d="M7.300 1.500 V14.500 H0.800Z" fill="#fafafa" stroke="#a8a8a8" stroke-width="0.900"/><path d="M8.500 0.500 L15.500 14.800 H8.500Z" fill="#5aa6e0"/><path d="M8.500 0.500 V14.800 H10.500Z" fill="#8ecbf9"/></g>
<g id="i_box"><path d="M6 3 L9 0 H16.500 V8 L13.500 11 H6Z" fill="#5aa6e0"/><path d="M6 3 L9 0 H16.500 L13.500 3Z" fill="#8ecbf9"/><path d="M13.500 3 L16.500 0 V8 L13.500 11Z" fill="#3d8cc8"/><rect x="0.500" y="3.300" width="12.300" height="12.300" fill="#f5f5f5" stroke="#8a8a8a" stroke-width="1"/><rect x="3" y="5.800" width="7.300" height="7.300" fill="#fff" stroke="#8a8a8a" stroke-width="0.900"/></g>
<g id="i_mv"><path d="M7.500 0 L10 3.500 H8.300 V6.700 H11.500 V5 L15 7.500 L11.500 10 V8.300 H8.300 V11.500 H10 L7.500 15 L5 11.500 H6.700 V8.300 H3.500 V10 L0 7.500 L3.500 5 V6.700 H6.700 V3.500 H5Z" fill="#333"/></g>
<g id="i_dia"><path d="M8 0.500 L16 8 L8.500 15.500 L0.500 8Z" fill="#d88a40"/><path d="M5.500 6.500 L9.500 4.500 L11 7.500 L7 9.500Z" fill="#7ac47a" stroke="#fff" stroke-width="0.600"/><path d="M1.500 11 V15.500 H6" fill="none" stroke="#666" stroke-width="1"/></g>
<g id="i_lay"><path d="M0.500 11 L3.500 8 H15.500 V12.500 L12.500 15.500 H0.500Z" fill="#e0e0e0" stroke="#aaa" stroke-width="0.800"/><path d="M0.500 4 L3.500 1 H15.500 V6 L12.500 9 H0.500Z" fill="#5aa6e0"/><path d="M0.500 4 L3.500 1 H15.500 L12.500 4Z" fill="#8ecbf9"/></g>
<g id="i_fade" opacity="0.850"><rect x="0.800" y="0.300" width="5.800" height="7" rx="1.500" fill="#f0f0f0" stroke="#b0b0b0" stroke-width="0.900"/><rect x="8" y="7.300" width="5.800" height="7" rx="1.500" fill="#e4e4e4" stroke="#a0a0a0" stroke-width="0.900"/><path d="M2.300 8.500 Q2.300 11.300 5.500 11.300" fill="none" stroke="#e04030" stroke-width="1.100"/><path d="M4.800 9.600 L7 11.300 L4.800 13Z" fill="#e04030"/></g>
</defs>
<g fill="#808080">
<rect x="12" y="1155.700" width="1.800" height="12.300"/><path d="M23 1155.700 V1168 L13.800 1161.800Z"/>
<path d="M46 1156.500 V1167.200 L36.100 1161.800Z"/><rect x="47.300" y="1159.500" width="1.600" height="4.800"/>
<path d="M62 1154.600 V1169 L74 1161.800Z"/>
<rect x="86" y="1159.500" width="1.600" height="4.800"/><path d="M88.800 1156.500 V1167.200 L98.700 1161.800Z"/>
<path d="M112 1155.700 V1168 L121.300 1161.800Z"/><rect x="121.300" y="1155.700" width="1.800" height="12.300"/>
</g>
<path d="M155.600 1171.800 V1177.900 H970.500 V1171.800" fill="none" stroke="#c8c8c8" stroke-width="2.100"/>
<path d="M179.6 1171.800 V1177.900 M203.5 1171.800 V1177.900 M227.5 1171.800 V1177.900 M251.5 1171.800 V1177.900 M275.4 1171.800 V1177.900 M299.4 1171.800 V1177.900 M323.4 1171.800 V1177.900 M347.4 1171.800 V1177.900 M371.3 1171.800 V1177.900 M395.3 1171.800 V1177.900 M419.3 1171.800 V1177.900 M443.2 1171.800 V1177.900 M467.2 1171.800 V1177.900 M491.2 1171.800 V1177.900 M515.1 1171.800 V1177.900 M539.1 1171.800 V1177.900 M563.1 1171.800 V1177.900 M587.1 1171.800 V1177.900 M611.0 1171.800 V1177.900 M635.0 1171.800 V1177.900 M659.0 1171.800 V1177.900 M682.9 1171.800 V1177.900 M706.9 1171.800 V1177.900 M730.9 1171.800 V1177.900 M754.9 1171.800 V1177.900 M778.8 1171.800 V1177.900 M802.8 1171.800 V1177.900 M826.8 1171.800 V1177.900 M850.7 1171.800 V1177.900 M874.7 1171.800 V1177.900 M898.7 1171.800 V1177.900 M922.6 1171.800 V1177.900 M946.6 1171.800 V1177.900" stroke="#c8c8c8" stroke-width="2" fill="none"/>
<use href="#i_nc" x="147.2" y="1153.0"/><use href="#i_sk" x="171.2" y="1153.0"/><use href="#i_ex" x="195.1" y="1153.0"/><use href="#i_sk" x="219.1" y="1153.0"/><use href="#i_ex" x="243.1" y="1153.0"/><use href="#i_sk" x="267.0" y="1153.0"/><use href="#i_ex" x="291.0" y="1153.0"/><use href="#i_sk" x="315.0" y="1153.0"/><use href="#i_sk" x="339.0" y="1153.0"/><use href="#i_ex" x="362.9" y="1153.0"/><use href="#i_ex" x="386.9" y="1153.0"/><use href="#i_sk" x="410.9" y="1153.0"/><use href="#i_ex" x="434.8" y="1153.0"/><use href="#i_sk" x="458.8" y="1153.0"/><use href="#i_ex" x="482.8" y="1153.0"/><use href="#i_ex" x="506.7" y="1153.0"/><use href="#i_sk" x="530.7" y="1153.0"/><use href="#i_ex" x="554.7" y="1153.0"/><use href="#i_sk" x="578.7" y="1153.0"/><use href="#i_ex" x="602.6" y="1153.0"/><use href="#i_pl" x="626.6" y="1153.0"/><use href="#i_tri" x="650.6" y="1153.0"/><use href="#i_box" x="674.5" y="1153.0"/><use href="#i_ex" x="698.5" y="1153.0"/><use href="#i_mv" x="722.5" y="1153.0"/><use href="#i_box" x="746.5" y="1153.0"/><use href="#i_sk" x="770.4" y="1153.0"/><use href="#i_ex" x="794.4" y="1153.0"/><use href="#i_ex" x="818.4" y="1153.0"/><use href="#i_sk" x="842.3" y="1153.0"/><use href="#i_dia" x="866.3" y="1153.0"/><use href="#i_pl" x="890.3" y="1153.0"/><use href="#i_lay" x="914.2" y="1153.0"/><use href="#i_box" x="938.2" y="1153.0"/><use href="#i_fade" x="962.2" y="1153.0"/>
<path d="M977 1147 H989.200 V1150.800 L984.300 1155.500 V1178.800 H981.900 V1155.500 L977 1150.800Z" fill="#333"/>
<g transform="translate(1411 1161.500)" fill="#858585"><circle r="5.600"/><g><rect x="-2" y="-8" width="4" height="16"/><rect x="-2" y="-8" width="4" height="16" transform="rotate(60)"/><rect x="-2" y="-8" width="4" height="16" transform="rotate(120)"/></g><circle r="2.800" fill="#f5f5f5"/></g>
</svg>
</body></html>
